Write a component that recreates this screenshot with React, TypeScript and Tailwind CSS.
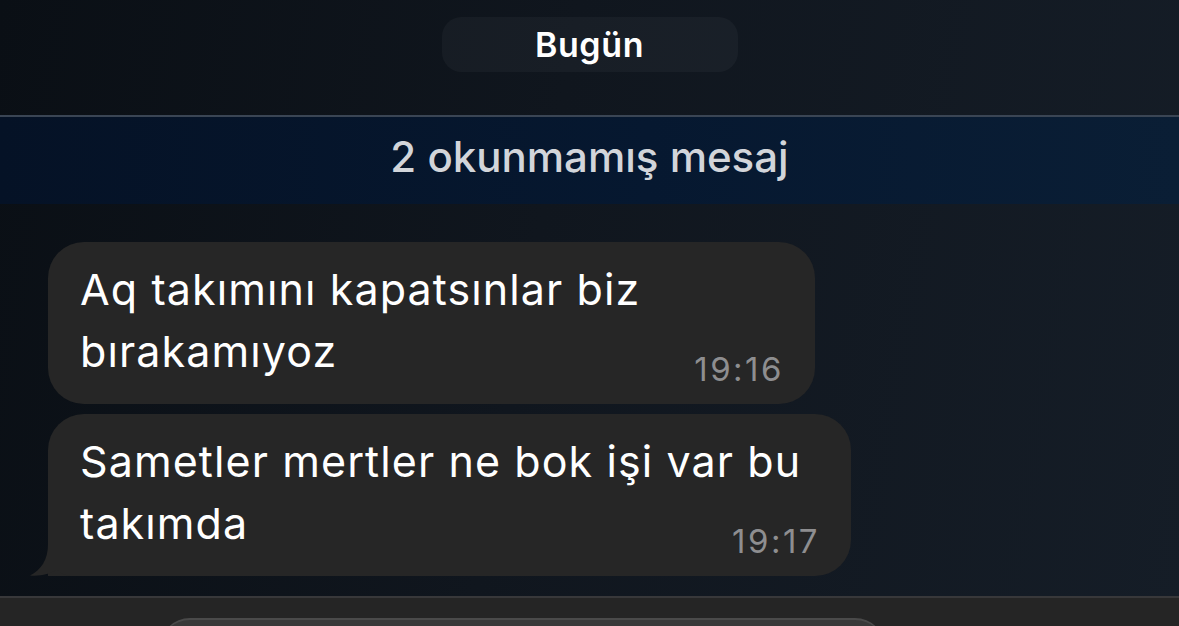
export default function App() {
  const messages = [
    { lines: ['Aq takımını kapatsınlar biz', 'bırakamıyoz'], time: '19:16', width: 'w-[767px]', tail: false },
    { lines: ['Sametler mertler ne bok işi var bu', 'takımda'], time: '19:17', width: 'w-[803px]', tail: true },
  ];

  return (
    <div
      className="h-[626px] w-full overflow-hidden flex flex-col bg-[linear-gradient(100deg,#0a0f15_0%,#10161e_45%,#151d27_100%)]"
      style={{ fontFamily: 'Inter, "Noto Sans", sans-serif' }}
    >
      {/* date pill */}
      <div className="pt-[17px] flex justify-center">
        <div className="w-[296px] h-[55px] rounded-[20px] bg-white/[0.035] flex items-center justify-center">
          <span className="text-[34px] font-semibold text-white leading-none tracking-[0.6px]">Bugün</span>
        </div>
      </div>

      {/* unread banner */}
      <div className="mt-[43px] h-[89px] border-t-2 border-[#3a4554] bg-[linear-gradient(90deg,#051226_0%,#061830_55%,#0a1e35_100%)] flex items-center justify-center pb-[8px]">
        <span className="text-[42px] font-medium text-[#d2d5da] leading-none">2 okunmamış mesaj</span>
      </div>

      {/* messages */}
      <div className="flex-1 flex flex-col gap-[10px] pt-[38px] pl-[48px]">
        {messages.map((m) => (
          <div
            key={m.time}
            className={`relative ${m.width} h-[162px] bg-[#262626] rounded-[36px] ${m.tail ? 'rounded-bl-none' : ''} flex items-end pl-[32px] pr-[31px]`}
          >
            <p className="flex-1 min-w-0 self-start pt-[16px] text-[43px] leading-[62px] tracking-[1.1px] text-white">
              {m.lines.map((l) => (
                <span key={l} className="block whitespace-nowrap">{l}</span>
              ))}
            </p>
            <span className="shrink-0 pb-[19px] text-[33px] leading-[32px] tracking-[2.5px] text-[#8e8e90]">{m.time}</span>
            {m.tail && (
              <svg className="absolute left-[-18px] bottom-0" width="44" height="60" viewBox="0 0 44 60">
                <path d="M18 0 L18 28 C18 44 11 54 0 59.5 C10 60.5 20 58 27 53.5 C31 58 37 60 44 60 L18 60 Z" fill="#262626" />
              </svg>
            )}
          </div>
        ))}
      </div>

      {/* input bar */}
      <div className="h-[30px] border-t-2 border-[#38383a] bg-[#252525] pt-[20px]">
        <div className="ml-[160px] w-[725px] h-[40px] rounded-t-[30px] bg-[#393939] border-t-2 border-[#4a4a4a]" />
      </div>
    </div>
  );
}
